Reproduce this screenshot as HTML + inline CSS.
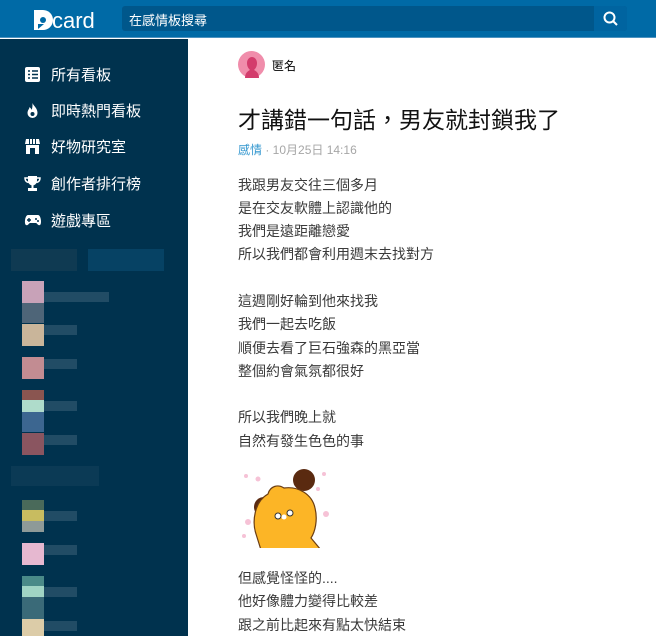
<!DOCTYPE html>
<html><head><meta charset="utf-8"><style>
*{margin:0;padding:0;box-sizing:border-box}
body{width:656px;height:636px;overflow:hidden;background:#fff;font-family:"Liberation Sans","Noto Sans CJK TC",sans-serif;position:relative}
.hdr{position:absolute;left:0;top:0;width:656px;height:38px;background:#006aa6;border-bottom:1px solid #4d93c0}
.logo{position:absolute;left:32px;top:6px;color:#fff;font-size:24px;font-weight:bold;letter-spacing:0}
.sb{position:absolute;left:122px;top:6px;width:505px;height:25px;background:#00578b;border-radius:3px}
.sb span{position:absolute;left:7px;top:4px;color:#fff;font-size:13px}
.btn{position:absolute;right:0;top:0;width:33px;height:25px;background:#0064a0;border-radius:0 3px 3px 0}
.side{position:absolute;left:0;top:39px;width:188px;height:597px;background:#00324e}
.item{position:absolute;left:24px;color:#fff;font-size:15px;display:flex;align-items:center}
.item i{display:inline-block;width:17px;height:17px;margin-right:10px;position:relative}
.px{position:absolute}
.g{opacity:.55}
.t{position:absolute;left:238px;font-size:14px;color:#3a3a3a;white-space:nowrap}
</style></head><body>
<div class="hdr">
 <div class="logo"><svg width="26" height="24" viewBox="0 0 26 24" style="position:absolute;left:0;top:2px"><path d="M2 2h9a10 10 0 0 1 0 20H2z" fill="#fff"/><circle cx="11" cy="12" r="3" fill="#006aa6"/><path d="M6 16l6 0-6 5z" fill="#006aa6"/></svg><span style="position:absolute;left:20px;top:2px;font-size:22px;font-weight:normal">card</span></div>
 <div class="sb"><span>在感情板搜尋</span><div class="btn"><svg width="33" height="25"><circle cx="15.5" cy="11.5" r="5" stroke="#fff" stroke-width="2" fill="none"/><path d="M19 15l4 4" stroke="#fff" stroke-width="2"/></svg></div></div>
</div>
<div class="side">
 <div class="item" style="top:25px"><i><svg width="17" height="17"><rect x="1" y="1" width="15" height="15" rx="2" fill="#fff"/><path d="M4 5h2M8 5h6M4 8.5h2M8 8.5h6M4 12h2M8 12h6" stroke="#00324e" stroke-width="1.6"/></svg></i>所有看板</div>
 <div class="item" style="top:61px"><i><svg width="17" height="17"><path d="M8.5 1c1 3 5 5 5 10a5 5 0 0 1-10 0c0-3 2-4 2-6 1 1 2 2 2 3 1-2 1-4 1-7z" fill="#fff"/><circle cx="8.5" cy="12" r="2" fill="#00324e"/></svg></i>即時熱門看板</div>
 <div class="item" style="top:97px"><i><svg width="17" height="17"><path d="M2 1h13l1 5H1z" fill="#fff"/><rect x="2" y="7" width="13" height="9" fill="#fff"/><rect x="6" y="10" width="5" height="6" fill="#00324e"/><path d="M5.5 1v5M8.5 1v5M11.5 1v5" stroke="#00324e"/></svg></i>好物研究室</div>
 <div class="item" style="top:134px"><i><svg width="17" height="17"><path d="M4 1h9v5a4.5 4.5 0 0 1-9 0z" fill="#fff"/><path d="M4 3H1c0 3 1.5 4 3.5 4.5M13 3h3c0 3-1.5 4-3.5 4.5" stroke="#fff" stroke-width="1.5" fill="none"/><rect x="7.5" y="10" width="2" height="3" fill="#fff"/><rect x="4" y="13" width="9" height="3" fill="#fff"/></svg></i>創作者排行榜</div>
 <div class="item" style="top:171px"><i><svg width="18" height="17"><path d="M4 3h10c3 0 4 9 2 10-2 1-3-2-4-2H6c-1 0-2 3-4 2-2-1-1-10 2-10z" fill="#fff"/><path d="M5 6v4M3 8h4" stroke="#00324e" stroke-width="1.4"/><circle cx="12" cy="7" r="1" fill="#00324e"/><circle cx="14" cy="9" r="1" fill="#00324e"/></svg></i>遊戲專區</div>
 <div class="px" style="left:11px;top:210px;width:66px;height:22px;background:#0f3a52"></div>
 <div class="px" style="left:88px;top:210px;width:76px;height:22px;background:#064264"></div>
 <div class="px" style="left:22px;top:242px;width:22px;height:22px;background:#c8a2b8"></div>
 <div class="px g" style="left:44px;top:253px;width:65px;height:10px;background:#3d6379"></div>
 <div class="px" style="left:22px;top:264px;width:22px;height:20px;background:#4e6578"></div>
 <div class="px" style="left:22px;top:285px;width:22px;height:22px;background:#c9b59a"></div>
 <div class="px g" style="left:44px;top:286px;width:33px;height:10px;background:#3d6379"></div>
 <div class="px" style="left:22px;top:318px;width:22px;height:22px;background:#c28c92"></div>
 <div class="px g" style="left:44px;top:320px;width:33px;height:10px;background:#3d6379"></div>
 <div class="px" style="left:22px;top:351px;width:22px;height:10px;background:#8a5550"></div>
 <div class="px" style="left:22px;top:361px;width:22px;height:12px;background:#afdccb"></div>
 <div class="px" style="left:22px;top:373px;width:22px;height:20px;background:#3c6690"></div>
 <div class="px g" style="left:44px;top:362px;width:33px;height:10px;background:#3d6379"></div>
 <div class="px" style="left:22px;top:394px;width:22px;height:22px;background:#8a5560"></div>
 <div class="px g" style="left:44px;top:396px;width:33px;height:10px;background:#3d6379"></div>
 <div class="px" style="left:11px;top:427px;width:88px;height:20px;background:#0b3a55"></div>
 <div class="px" style="left:22px;top:461px;width:22px;height:10px;background:#4a6a5a"></div>
 <div class="px" style="left:22px;top:471px;width:22px;height:11px;background:#c8bc60"></div>
 <div class="px" style="left:22px;top:482px;width:22px;height:11px;background:#8e9a98"></div>
 <div class="px g" style="left:44px;top:472px;width:33px;height:10px;background:#3d6379"></div>
 <div class="px" style="left:22px;top:504px;width:22px;height:22px;background:#e6b8d0"></div>
 <div class="px g" style="left:44px;top:506px;width:33px;height:10px;background:#3d6379"></div>
 <div class="px" style="left:22px;top:537px;width:22px;height:10px;background:#4a8a88"></div>
 <div class="px" style="left:22px;top:547px;width:22px;height:11px;background:#a0d4c4"></div>
 <div class="px" style="left:22px;top:558px;width:22px;height:22px;background:#3a6a78"></div>
 <div class="px g" style="left:44px;top:548px;width:33px;height:10px;background:#3d6379"></div>
 <div class="px" style="left:22px;top:580px;width:22px;height:17px;background:#dccca8"></div>
 <div class="px g" style="left:44px;top:582px;width:33px;height:10px;background:#3d6379"></div>
</div>
<svg style="position:absolute;left:238px;top:51px" width="27" height="27"><circle cx="13.5" cy="13.5" r="13.5" fill="#f08dab"/><path d="M7 27c0-5 3-7 5-8-2-2-3-4-3-7 0-3 2-6 5-6s5 3 5 6c0 3-1 5-3 7 2 1 5 3 5 8z" fill="#d33c6c"/></svg>
<div class="t" style="left:272px;top:57px;font-size:12px;color:#000">匿名</div>
<div class="t" style="top:101px;font-size:23px;color:#111">才講錯一句話，男友就封鎖我了</div>
<div class="t" style="top:141px;font-size:12px;color:#a6a6a6"><span style="color:#3397cf">感情</span> · 10月25日 14:16</div>
<div class="t" style="top:175px">我跟男友交往三個多月</div>
<div class="t" style="top:198px">是在交友軟體上認識他的</div>
<div class="t" style="top:221px">我們是遠距離戀愛</div>
<div class="t" style="top:244px">所以我們都會利用週末去找對方</div>
<div class="t" style="top:291px">這週剛好輪到他來找我</div>
<div class="t" style="top:314px">我們一起去吃飯</div>
<div class="t" style="top:338px">順便去看了巨石強森的黑亞當</div>
<div class="t" style="top:361px">整個約會氣氛都很好</div>
<div class="t" style="top:407px">所以我們晚上就</div>
<div class="t" style="top:431px">自然有發生色色的事</div>
<svg style="position:absolute;left:236px;top:464px" width="96" height="84">
<g fill="#f6c2d6"><circle cx="10" cy="12" r="2"/><circle cx="22" cy="15" r="2.5"/><circle cx="88" cy="10" r="2"/><circle cx="82" cy="25" r="2"/><circle cx="90" cy="50" r="3"/><circle cx="12" cy="58" r="3"/><circle cx="8" cy="72" r="2"/></g>
<circle cx="28" cy="43" r="10" fill="#5a2a10"/><circle cx="68" cy="16" r="11" fill="#5a2a10"/>
<path d="M20 70c-4-12-2-32 12-40 2-8 10-10 16-6 14-2 28 6 31 20 3 12 0 24-4 30l10 12H25z" fill="#fcb526" stroke="#6b3d12" stroke-width="1.2"/>
<circle cx="42" cy="52" r="3" fill="#fff" stroke="#333"/><circle cx="54" cy="49" r="3" fill="#fff" stroke="#333"/><circle cx="48" cy="53" r="2.5" fill="#fff"/>
</svg>
<div class="t" style="top:568px">但感覺怪怪的....</div>
<div class="t" style="top:591px">他好像體力變得比較差</div>
<div class="t" style="top:615px">跟之前比起來有點太快結束</div>
</body></html>
